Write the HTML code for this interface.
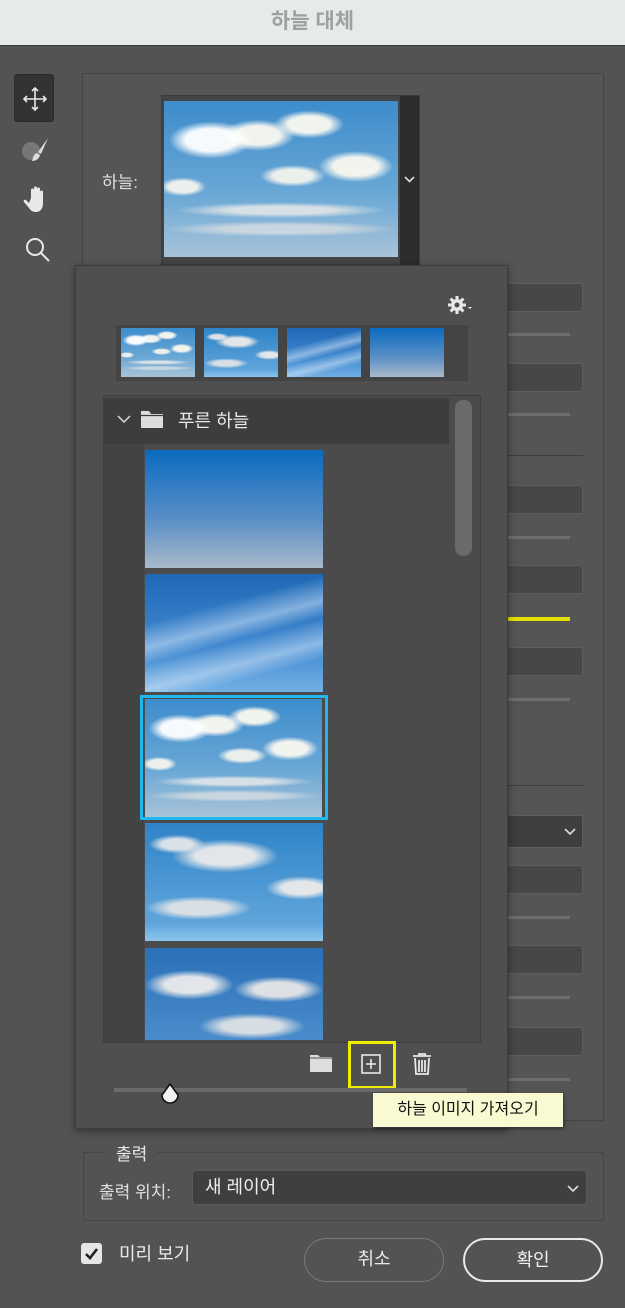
<!DOCTYPE html>
<html><head><meta charset="utf-8"><style>
*{margin:0;padding:0;box-sizing:border-box}
body{width:625px;height:1308px;background:#535353;position:relative;overflow:hidden;font-family:"Liberation Sans","Noto Sans CJK KR",sans-serif;color:#e8e8e8}
.a{position:absolute}
.inp{position:absolute;left:500px;width:83px;height:29px;background:#474747;border:1px solid #5e5e5e;border-radius:3px}
.sl{position:absolute;left:507px;width:63px;height:3px;background:#6e6e6e}
.hr{position:absolute;left:507px;width:76px;height:1px;background:#3f3f3f}
.cl{background:
radial-gradient(ellipse 18% 12% at 20% 25%,rgba(255,255,255,.95) 60%,rgba(255,255,255,0) 100%),
radial-gradient(ellipse 16% 10% at 40% 22%,rgba(250,248,240,.95) 60%,rgba(255,255,255,0) 100%),
radial-gradient(ellipse 15% 9% at 62% 15%,rgba(250,248,240,.95) 60%,rgba(255,255,255,0) 100%),
radial-gradient(ellipse 16% 10% at 82% 42%,rgba(250,248,240,.95) 60%,rgba(255,255,255,0) 100%),
radial-gradient(ellipse 14% 7% at 55% 48%,rgba(250,248,240,.9) 60%,rgba(255,255,255,0) 100%),
radial-gradient(ellipse 10% 6% at 8% 55%,rgba(250,248,240,.9) 60%,rgba(255,255,255,0) 100%),
radial-gradient(ellipse 45% 5% at 50% 70%,rgba(245,240,235,.75) 50%,rgba(255,255,255,0) 100%),
radial-gradient(ellipse 50% 5% at 50% 82%,rgba(240,235,230,.6) 50%,rgba(255,255,255,0) 100%),
linear-gradient(#3d8ccc,#6aa8d6 60%,#a9c3d8)}
.cl2{background:
radial-gradient(ellipse 30% 14% at 45% 28%,rgba(235,235,235,.95) 55%,rgba(255,255,255,0) 100%),
radial-gradient(ellipse 16% 8% at 18% 18%,rgba(235,235,235,.9) 55%,rgba(255,255,255,0) 100%),
radial-gradient(ellipse 20% 10% at 88% 55%,rgba(235,235,235,.95) 55%,rgba(255,255,255,0) 100%),
radial-gradient(ellipse 30% 10% at 30% 72%,rgba(230,230,230,.9) 55%,rgba(255,255,255,0) 100%),
linear-gradient(#2f83c6,#5fa5dc 85%,#8cc5ec)}
.cl3{background:
radial-gradient(ellipse 25% 16% at 25% 40%,rgba(235,235,235,.95) 55%,rgba(255,255,255,0) 100%),
radial-gradient(ellipse 25% 14% at 75% 45%,rgba(230,230,230,.95) 55%,rgba(255,255,255,0) 100%),
radial-gradient(ellipse 30% 14% at 60% 85%,rgba(230,230,230,.9) 55%,rgba(255,255,255,0) 100%),
linear-gradient(#2a70b8,#4a8ccb)}
.wisp{background:
linear-gradient(165deg,rgba(255,255,255,0) 30%,rgba(220,235,250,.5) 45%,rgba(255,255,255,0) 55%,rgba(220,235,250,.5) 70%,rgba(255,255,255,0) 80%),
linear-gradient(#1f68b6,#3f87cf 60%,#72b0e4)}
.plain{background:linear-gradient(#0a6bc0,#5b8fc6 60%,#a9b9cb)}
</style></head><body>
<div class="a" style="left:0;top:0;width:625px;height:46px;background:#e6ebe7;border-bottom:1px solid #3a3a3a;text-align:center;font-size:21px;line-height:44px;color:#9da19f;font-weight:bold">하늘 대체</div>

<!-- tools -->
<div class="a" style="left:14px;top:74px;width:40px;height:48px;background:#333;border-radius:3px;border:1px solid #2a2a2a"></div>
<svg class="a" style="left:20px;top:84px" width="30" height="30" viewBox="0 0 30 30" fill="none" stroke="#e8e8e8" stroke-width="1.6"><path d="M15 4v22M4 15h22M12 7l3-3 3 3M12 23l3 3 3-3M7 12l-3 3 3 3M23 12l3 3-3 3"/></svg>
<svg class="a" style="left:18px;top:134px" width="40" height="32" viewBox="0 0 40 32"><circle cx="13" cy="17" r="9" fill="#777"/><path d="M30 4l-10 14 3 2z" fill="#ddd"/><path d="M19 19c-3 1-4 4-5 8 4 0 7-2 8-6z" fill="#ddd"/></svg>
<svg class="a" style="left:22px;top:184px" width="32" height="32" viewBox="0 0 32 32" fill="#e8e8e8"><path d="M9 14V6a1.5 1.5 0 013 0v7V4a1.5 1.5 0 013 0v9V5a1.5 1.5 0 013 0v9V8a1.5 1.5 0 013 0v11c0 6-3 9-7 9-3 0-5-1-7-4l-5-6c-1-1 0-3 2-2l3 3z"/></svg>
<svg class="a" style="left:22px;top:234px" width="32" height="32" viewBox="0 0 32 32" fill="none" stroke="#e8e8e8" stroke-width="2"><circle cx="13" cy="13" r="8"/><path d="M19 19l8 8"/></svg>

<!-- main panel -->
<div class="a" style="left:82px;top:73px;width:522px;height:1048px;border:1px solid #444;background:#555"></div>
<div class="a" style="left:102px;top:168px;font-size:17px;color:#e0e0e0">하늘:</div>
<div class="a" style="left:161px;top:95px;width:259px;height:170px;background:#444;border:1px solid #3a3a3a"></div>
<div class="a cl" style="left:164px;top:101px;width:234px;height:156px"></div>
<div class="a" style="left:400px;top:96px;width:19px;height:169px;background:#2d2d2d"></div>
<svg class="a" style="left:404px;top:176px" width="11" height="8" viewBox="0 0 11 8" fill="none" stroke="#ddd" stroke-width="1.6"><path d="M1 1l4.5 4.5L10 1"/></svg>

<!-- right column controls -->
<div class="inp" style="top:283px"></div><div class="sl" style="top:333px"></div>
<div class="inp" style="top:363px"></div><div class="sl" style="top:413px"></div>
<div class="hr" style="top:455px"></div>
<div class="inp" style="top:485px"></div><div class="sl" style="top:536px"></div>
<div class="inp" style="top:565px"></div><div class="sl" style="top:617px;background:#e6e000;height:4px"></div>
<div class="inp" style="top:647px"></div><div class="sl" style="top:698px"></div>
<div class="hr" style="top:785px"></div>
<div class="inp" style="top:815px;height:33px;background:#3e3e3e"></div>
<svg class="a" style="left:564px;top:828px" width="12" height="8" viewBox="0 0 12 8" fill="none" stroke="#ddd" stroke-width="1.6"><path d="M1 1l5 5 5-5"/></svg>
<div class="inp" style="top:865px"></div><div class="sl" style="top:916px"></div>
<div class="inp" style="top:945px"></div><div class="sl" style="top:996px"></div>
<div class="inp" style="top:1027px"></div><div class="sl" style="top:1078px"></div>

<!-- popup -->
<div class="a" style="left:75px;top:265px;width:433px;height:864px;background:#4f4f4f;border:1px solid #3c3c3c;box-shadow:0 2px 8px rgba(0,0,0,.4)"></div>
<svg class="a" style="left:446px;top:294px" width="30" height="22" viewBox="0 0 30 22"><g fill="#e8e8e8"><circle cx="11" cy="11" r="6"/><g stroke="#e8e8e8" stroke-width="3"><path d="M11 2v18M2 11h18M4.6 4.6l12.8 12.8M17.4 4.6L4.6 17.4"/></g></g><circle cx="11" cy="11" r="2.5" fill="#4f4f4f"/><path d="M22 13l2 2 2-2z" fill="#e8e8e8"/></svg>
<div class="a" style="left:116px;top:325px;width:352px;height:56px;background:#444"></div>
<div class="a cl" style="left:121px;top:328px;width:74px;height:49px"></div>
<div class="a cl2" style="left:204px;top:328px;width:74px;height:49px"></div>
<div class="a wisp" style="left:287px;top:328px;width:74px;height:49px"></div>
<div class="a plain" style="left:370px;top:328px;width:74px;height:49px"></div>

<div class="a" style="left:103px;top:395px;width:378px;height:648px;background:#4b4b4b;border:1px solid #3e3e3e"></div>
<div class="a" style="left:104px;top:444px;width:40px;height:598px;background:#434343"></div>
<div class="a" style="left:104px;top:398px;width:345px;height:46px;background:#3d3d3d"></div>
<svg class="a" style="left:116px;top:413px" width="16" height="12" viewBox="0 0 16 12" fill="none" stroke="#ddd" stroke-width="1.5"><path d="M2 3l6 6 6-6"/></svg>
<svg class="a" style="left:139px;top:408px" width="26" height="22" viewBox="0 0 26 22"><path d="M2 3h8l2 3h12v14H2z" fill="#ddd"/><path d="M3.5 8h19v10.5h-19z" fill="#3d3d3d" opacity=".0"/><path d="M2 7.5h22" stroke="#3d3d3d" stroke-width="1.3"/></svg>
<div class="a" style="left:178px;top:407px;font-size:18px;color:#eaeaea">푸른 하늘</div>
<div class="a" style="left:455px;top:400px;width:17px;height:156px;background:#6a6a6a;border-radius:8px"></div>

<div class="a plain" style="left:145px;top:450px;width:178px;height:118px"></div>
<div class="a wisp" style="left:145px;top:574px;width:178px;height:118px"></div>
<div class="a" style="left:140px;top:695px;width:188px;height:125px;border:3px solid #1fb7f0"></div>
<div class="a cl" style="left:145px;top:699px;width:177px;height:118px"></div>
<div class="a cl2" style="left:145px;top:823px;width:178px;height:118px"></div>
<div class="a cl3" style="left:145px;top:948px;width:178px;height:92px"></div>

<!-- bottom icons -->
<svg class="a" style="left:309px;top:1053px" width="24" height="20" viewBox="0 0 24 20"><path d="M1 2h8l2 2h12v15H1z" fill="#ddd"/><path d="M1 5h22" stroke="#4f4f4f" stroke-width="1"/></svg>
<div class="a" style="left:348px;top:1041px;width:48px;height:48px;border:3px solid #f0ee00"></div>
<svg class="a" style="left:360px;top:1053px" width="22" height="22" viewBox="0 0 22 22" fill="none" stroke="#e8e8e8" stroke-width="1.6"><rect x="2" y="2" width="18" height="18"/><path d="M11 6v10M6 11h10"/></svg>
<svg class="a" style="left:411px;top:1052px" width="22" height="24" viewBox="0 0 22 24" fill="none" stroke="#e8e8e8" stroke-width="1.8"><path d="M2 4h18M8 4V2h6v2M4 6l1 16h12l1-16M8 8v12M11 8v12M14 8v12"/></svg>
<div class="a" style="left:114px;top:1088px;width:353px;height:4px;background:#6a6a6a"></div>
<svg class="a" style="left:158px;top:1082px" width="24" height="24" viewBox="0 0 24 24"><path d="M12 2L4 13a8 8 0 0016 0z" fill="#f2f2f2" stroke="#111" stroke-width="1.6" stroke-linejoin="round"/></svg>

<!-- tooltip -->
<div class="a" style="left:373px;top:1093px;width:190px;height:34px;background:#fafad2;color:#111;font-size:16px;line-height:34px;text-align:center;box-shadow:1px 2px 4px rgba(0,0,0,.4)">하늘 이미지 가져오기</div>

<!-- output -->
<div class="a" style="left:83px;top:1152px;width:521px;height:69px;border:1px solid #474747"></div>
<div class="a" style="left:106px;top:1140px;padding:0 10px;background:#535353;font-size:17px;color:#e8e8e8">출력</div>
<div class="a" style="left:99px;top:1178px;font-size:17px;color:#e0e0e0">출력 위치:</div>
<div class="a" style="left:192px;top:1170px;width:395px;height:35px;background:#3f3f3f;border:1px solid #5a5a5a;border-radius:4px;font-size:18px;line-height:33px;padding-left:12px;color:#eee">새 레이어</div>
<svg class="a" style="left:567px;top:1185px" width="12" height="8" viewBox="0 0 12 8" fill="none" stroke="#ddd" stroke-width="1.6"><path d="M1 1l5 5 5-5"/></svg>

<div class="a" style="left:81px;top:1243px;width:21px;height:21px;background:#e6e6e6;border-radius:3px"></div>
<svg class="a" style="left:83px;top:1245px" width="17" height="17" viewBox="0 0 17 17" fill="none" stroke="#222" stroke-width="2.6"><path d="M3 9l4 4 7-9"/></svg>
<div class="a" style="left:119px;top:1240px;font-size:18px;color:#eaeaea">미리 보기</div>
<div class="a" style="left:304px;top:1238px;width:140px;height:44px;border:1.5px solid #7a7a7a;border-radius:22px;text-align:center;line-height:41px;font-size:18px;color:#eaeaea">취소</div>
<div class="a" style="left:463px;top:1238px;width:140px;height:44px;border:2px solid #eaeaea;border-radius:22px;text-align:center;line-height:40px;font-size:18px;color:#f2f2f2">확인</div>
</body></html>
